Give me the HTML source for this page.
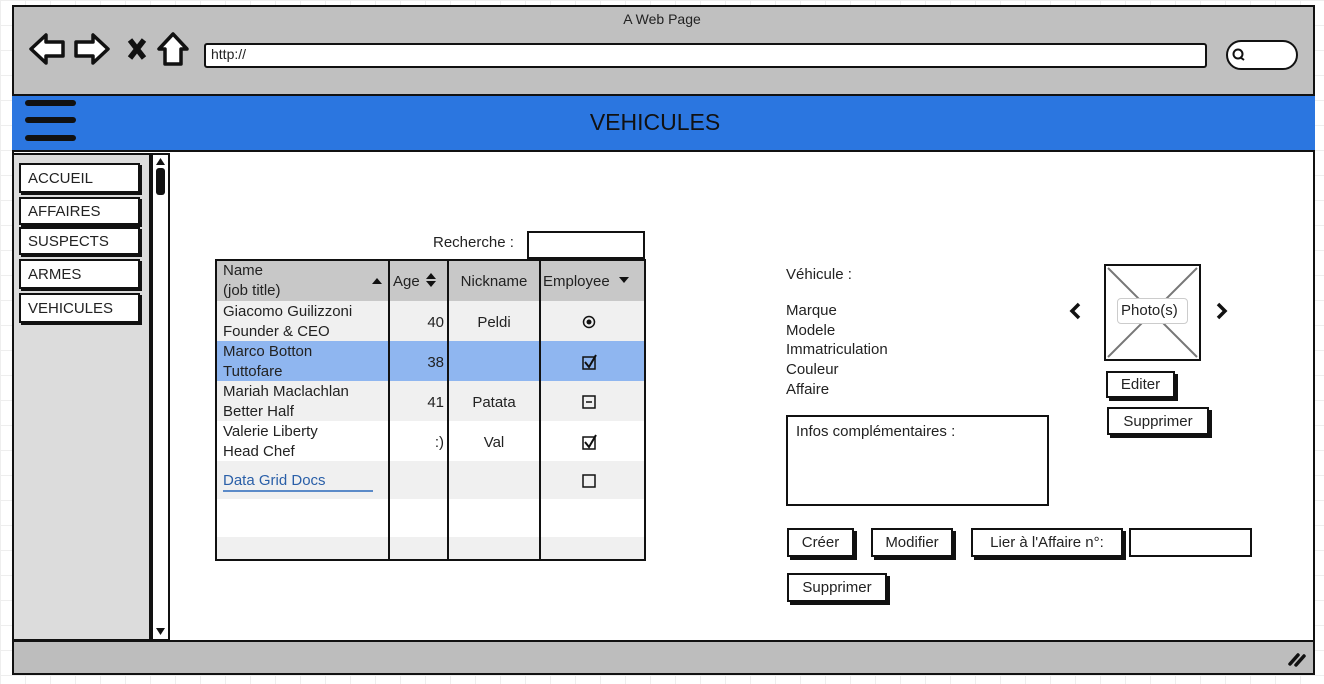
<!DOCTYPE html>
<html><head><meta charset="utf-8"><style>
*{box-sizing:border-box;margin:0;padding:0}
body{width:1324px;height:684px;background:#fff;position:relative;overflow:hidden;font-family:"Liberation Sans",sans-serif;font-size:15px;color:#222}
.a{position:absolute}
.btn{position:absolute;background:#fff;border:2px solid #111;box-shadow:3px 3px 0 #111;font-size:15px;display:flex;align-items:center;justify-content:center}
.nav{position:absolute;left:19px;width:121px;background:#fff;border:2px solid #111;box-shadow:2px 2px 0 #111;padding-left:7px;font-size:15px;display:flex;align-items:center}
.t{position:absolute;white-space:nowrap}
.row{position:absolute;left:0;width:427px}
.cell{position:absolute;line-height:20px;font-size:15px}
</style></head><body>
<div class="a" style="left:0;top:0;width:1324px;height:684px;background-image:linear-gradient(#eee 1px,transparent 1px),linear-gradient(90deg,#eee 1px,transparent 1px);background-size:25px 25px"></div>
<div class="a" style="left:12px;top:5px;width:1303px;height:670px;border:2px solid #111;background:#fff"></div>
<div class="a" style="left:14px;top:7px;width:1299px;height:88px;background:#c0c0c0"></div>
<div class="t" style="left:0;width:1324px;text-align:center;top:11px;font-size:14px">A Web Page</div>
<svg class="a" style="left:28px;top:30px" width="165" height="40" viewBox="0 0 165 40">
<path d="M3 19 L18 5 L18 12 L35 12 L35 26 L18 26 L18 33 Z" fill="#fff" stroke="#111" stroke-width="3.5" stroke-linejoin="round"/>
<path d="M80 19 L65 5 L65 12 L48 12 L48 26 L65 26 L65 33 Z" fill="#fff" stroke="#111" stroke-width="3.5" stroke-linejoin="round"/>
<path d="M102 10 L116 28 M116 10 L102 28" stroke="#111" stroke-width="5.5"/>
<path d="M145 4 L131 19 L137 19 L137 34 L153 34 L153 19 L159 19 Z" fill="#fff" stroke="#111" stroke-width="3.5" stroke-linejoin="round"/>
</svg>
<div class="a" style="left:204px;top:43px;width:1003px;height:25px;background:#fff;border:2px solid #111;border-radius:3px"></div>
<div class="t" style="left:211px;top:46px;font-size:14px">http://</div>
<div class="a" style="left:1226px;top:40px;width:72px;height:30px;background:#fff;border:2px solid #111;border-radius:16px"></div>
<svg class="a" style="left:1231px;top:46px" width="16" height="18"><circle cx="7" cy="8" r="4.5" fill="none" stroke="#111" stroke-width="2"/><path d="M9 11 L13 14" stroke="#111" stroke-width="2"/></svg>
<div class="a" style="left:12px;top:94px;width:1303px;height:58px;background:#2b76e0;border-top:2px solid #111;border-bottom:2px solid #111"></div>
<div class="a" style="left:25px;top:100px;width:51px;height:6px;background:#111;border-radius:3px"></div>
<div class="a" style="left:25px;top:117px;width:51px;height:6px;background:#111;border-radius:3px"></div>
<div class="a" style="left:25px;top:135px;width:51px;height:6px;background:#111;border-radius:3px"></div>
<div class="t" style="left:0;width:1310px;text-align:center;top:109px;font-size:23px;color:#111">VEHICULES</div>
<div class="a" style="left:12px;top:153px;width:139px;height:488px;background:#dcdcdc;border:2px solid #111"></div>
<div class="a" style="left:151px;top:153px;width:19px;height:488px;background:#fff;border:2px solid #111"></div>
<svg class="a" style="left:153px;top:155px" width="15" height="484"><path d="M3 10 L7.5 3 L12 10Z" fill="#111"/><rect x="3" y="13" width="9" height="27" rx="3" fill="#111"/><path d="M3 473 L7.5 480 L12 473Z" fill="#111"/></svg>
<div class="nav" style="top:163px;height:30px">ACCUEIL</div>
<div class="nav" style="top:197px;height:28px">AFFAIRES</div>
<div class="nav" style="top:227px;height:28px">SUSPECTS</div>
<div class="nav" style="top:259px;height:30px">ARMES</div>
<div class="nav" style="top:293px;height:30px">VEHICULES</div>
<div class="a" style="left:12px;top:640px;width:1303px;height:35px;background:#bdbdbd;border:2px solid #111"></div>
<svg class="a" style="left:1287px;top:650px" width="22" height="18"><path d="M3 14 L11 5 M9 15 L17 6" stroke="#111" stroke-width="3.5" stroke-linecap="round"/></svg>
<div class="t" style="left:433px;top:234px">Recherche :</div>
<div class="a" style="left:527px;top:231px;width:118px;height:28px;border:2px solid #111;background:#fff"></div>
<div class="a" style="left:215px;top:259px;width:431px;height:302px;border:2px solid #111;background:#fff;overflow:hidden">
 <div class="row" style="top:0;height:40px;background:#c8c8c8"></div>
 <div class="row" style="top:40px;height:40px;background:#f0f0f0"></div>
 <div class="row" style="top:80px;height:40px;background:#8fb6f0"></div>
 <div class="row" style="top:120px;height:40px;background:#f0f0f0"></div>
 <div class="row" style="top:160px;height:40px;background:#fff"></div>
 <div class="row" style="top:200px;height:38px;background:#f0f0f0"></div>
 <div class="row" style="top:238px;height:38px;background:#fff"></div>
 <div class="row" style="top:276px;height:30px;background:#f0f0f0"></div>
 <div class="a" style="left:171px;top:0;width:2px;height:300px;background:#111"></div>
 <div class="a" style="left:230px;top:0;width:2px;height:300px;background:#111"></div>
 <div class="a" style="left:322px;top:0;width:2px;height:300px;background:#111"></div>
 <div class="cell" style="left:6px;top:0">Name<br>(job title)</div>
 <svg class="a" style="left:154px;top:16px" width="12" height="8"><path d="M1 7 L6 1 L11 7Z" fill="#111"/></svg>
 <div class="cell" style="left:176px;top:11px">Age</div>
 <svg class="a" style="left:208px;top:11px" width="12" height="16"><path d="M1 7 L6 1 L11 7Z M1 9 L6 15 L11 9Z" fill="#111"/></svg>
 <div class="cell" style="left:232px;width:90px;text-align:center;top:11px">Nickname</div>
 <div class="cell" style="left:326px;top:11px">Employee</div>
 <svg class="a" style="left:401px;top:15px" width="12" height="8"><path d="M1 1 L6 7 L11 1Z" fill="#111"/></svg>
 <div class="cell" style="left:6px;top:41px">Giacomo Guilizzoni<br>Founder &amp; CEO</div>
 <div class="cell" style="left:174px;width:53px;text-align:right;top:52px">40</div>
 <div class="cell" style="left:232px;width:90px;text-align:center;top:52px">Peldi</div>
 <div class="cell" style="left:6px;top:81px">Marco Botton<br>Tuttofare</div>
 <div class="cell" style="left:174px;width:53px;text-align:right;top:92px">38</div>
 <div class="cell" style="left:6px;top:121px">Mariah Maclachlan<br>Better Half</div>
 <div class="cell" style="left:174px;width:53px;text-align:right;top:132px">41</div>
 <div class="cell" style="left:232px;width:90px;text-align:center;top:132px">Patata</div>
 <div class="cell" style="left:6px;top:161px">Valerie Liberty<br>Head Chef</div>
 <div class="cell" style="left:174px;width:53px;text-align:right;top:172px">:)</div>
 <div class="cell" style="left:232px;width:90px;text-align:center;top:172px">Val</div>
 <div class="cell" style="left:6px;top:210px;color:#2a5fa8">Data Grid Docs</div>
 <div class="a" style="left:6px;top:229px;width:150px;height:2px;background:#5b8ac8"></div>
 <svg class="a" style="left:365px;top:50px" width="20" height="200">
  <circle cx="7" cy="11" r="5.5" fill="none" stroke="#111" stroke-width="1.5"/><circle cx="7" cy="11" r="2.5" fill="#111"/>
  <rect x="1" y="46" width="12" height="12" fill="none" stroke="#111" stroke-width="1.5"/><path d="M3 51 L7 56 L14 44" fill="none" stroke="#111" stroke-width="2"/>
  <rect x="1" y="85" width="12" height="12" fill="none" stroke="#111" stroke-width="1.5"/><path d="M4 91 L10 91" stroke="#111" stroke-width="1.5"/>
  <rect x="1" y="126" width="12" height="12" fill="none" stroke="#111" stroke-width="1.5"/><path d="M3 131 L7 136 L14 124" fill="none" stroke="#111" stroke-width="2"/>
  <rect x="1" y="164" width="12" height="12" fill="none" stroke="#111" stroke-width="1.5"/>
 </svg>
</div>
<div class="t" style="left:786px;top:266px">Véhicule :</div>
<div class="t" style="left:786px;top:301px;line-height:19.7px">Marque<br>Modele<br>Immatriculation<br>Couleur<br>Affaire</div>
<div class="a" style="left:786px;top:415px;width:263px;height:91px;border:2px solid #111;background:#fff"></div>
<div class="t" style="left:796px;top:423px">Infos complémentaires :</div>
<div class="a" style="left:1104px;top:264px;width:97px;height:97px;border:2px solid #111;background:#fff"></div>
<svg class="a" style="left:1106px;top:266px" width="93" height="93"><path d="M2 2 L91 91 M91 2 L2 91" stroke="#777" stroke-width="2"/></svg>
<div class="a" style="left:1117px;top:298px;width:71px;height:26px;border:1px solid #ccc;border-radius:4px;background:#fff"></div>
<div class="t" style="left:1121px;top:302px">Photo(s)</div>
<svg class="a" style="left:1067px;top:302px" width="165" height="20"><path d="M12 2 L5 9 L12 16" fill="none" stroke="#111" stroke-width="3.5"/><path d="M151 2 L158 9 L151 16" fill="none" stroke="#111" stroke-width="3.5"/></svg>
<div class="btn" style="left:1106px;top:371px;width:69px;height:27px">Editer</div>
<div class="btn" style="left:1107px;top:407px;width:102px;height:28px">Supprimer</div>
<div class="btn" style="left:787px;top:528px;width:67px;height:29px">Créer</div>
<div class="btn" style="left:871px;top:528px;width:82px;height:29px">Modifier</div>
<div class="btn" style="left:971px;top:528px;width:152px;height:29px">Lier à l'Affaire n°:</div>
<div class="a" style="left:1129px;top:528px;width:123px;height:29px;border:2px solid #111;background:#fff"></div>
<div class="btn" style="left:787px;top:573px;width:100px;height:29px">Supprimer</div>
</body></html>
